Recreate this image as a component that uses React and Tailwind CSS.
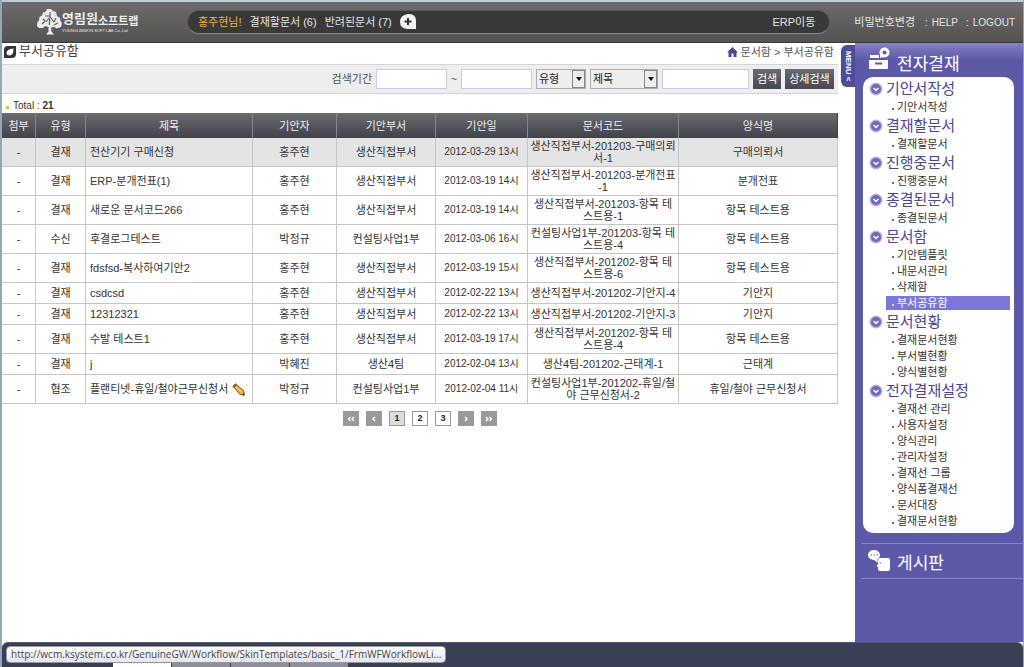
import clsx from "clsx";

const documents = [
  { type: "결재", title: "전산기기 구매신청", author: "홍주현", dept: "생산직접부서", date: "2012-03-29 13시", code: ["생산직접부서-201203-구매의뢰", "서-1"], form: "구매의뢰서" },
  { type: "결재", title: "ERP-분개전표(1)", author: "홍주현", dept: "생산직접부서", date: "2012-03-19 14시", code: ["생산직접부서-201203-분개전표", "-1"], form: "분개전표" },
  { type: "결재", title: "새로운 문서코드266", author: "홍주현", dept: "생산직접부서", date: "2012-03-19 14시", code: ["생산직접부서-201203-항목 테", "스트용-1"], form: "항목 테스트용" },
  { type: "수신", title: "후결로그테스트", author: "박정규", dept: "컨설팅사업1부", date: "2012-03-06 16시", code: ["컨설팅사업1부-201203-항목 테", "스트용-4"], form: "항목 테스트용" },
  { type: "결재", title: "fdsfsd-복사하여기안2", author: "홍주현", dept: "생산직접부서", date: "2012-03-19 15시", code: ["생산직접부서-201202-항목 테", "스트용-6"], form: "항목 테스트용" },
  { type: "결재", title: "csdcsd", author: "홍주현", dept: "생산직접부서", date: "2012-02-22 13시", code: ["생산직접부서-201202-기안지-4"], form: "기안지" },
  { type: "결재", title: "12312321", author: "홍주현", dept: "생산직접부서", date: "2012-02-22 13시", code: ["생산직접부서-201202-기안지-3"], form: "기안지" },
  { type: "결재", title: "수발 테스트1", author: "홍주현", dept: "생산직접부서", date: "2012-03-19 17시", code: ["생산직접부서-201202-항목 테", "스트용-4"], form: "항목 테스트용" },
  { type: "결재", title: "j", author: "박혜진", dept: "생산4팀", date: "2012-02-04 13시", code: ["생산4팀-201202-근태계-1"], form: "근태계" },
  { type: "협조", title: "플랜티넷-휴일/철야근무신청서", author: "박정규", dept: "컨설팅사업1부", date: "2012-02-04 11시", code: ["컨설팅사업1부-201202-휴일/철", "야 근무신청서-2"], form: "휴일/철야 근무신청서", edit: true },
];

const menu = [
  { title: "기안서작성", items: ["기안서작성"] },
  { title: "결재할문서", items: ["결재할문서"] },
  { title: "진행중문서", items: ["진행중문서"] },
  { title: "종결된문서", items: ["종결된문서"] },
  { title: "문서함", items: ["기안템플릿", "내문서관리", "삭제함", "부서공유함"] },
  { title: "문서현황", items: ["결재문서현황", "부서별현황", "양식별현황"] },
  {
    title: "전자결재설정",
    items: ["결재선 관리", "사용자설정", "양식관리", "관리자설정", "결재선 그룹", "양식폼결재선", "문서대장", "결재문서현황"],
  },
];

const columns = ["첨부", "유형", "제목", "기안자", "기안부서", "기안일", "문서코드", "양식명"];

function Logo() {
  return (
    <a href="#" className="flex items-center text-[#ececec]" aria-label="영림원소프트랩">
      <svg width="25" height="26" viewBox="0 0 25 26" fill="none">
        <path
          d="M10 0h4l2 2 3 1 1 4 3 2 .5 3 1.500 2-1 4-4 1.500-3-1.500-3 .5.500 4 2.500 3H9l2.500-3v-4.500L8 17l-2 2H2l-2-2 .5-4L2 11.500 2.500 8 5 6.500 6 3.500 8.500 3z"
          fill="#ececec"
        />
        <path
          d="M8 7h5M13 3v5l-4 5M13 8l4 5M12.500 10v6M6 10l2 2-3 3M19 9l-2 4M17 16l4-2"
          stroke="#626262"
          strokeWidth="1.200"
        />
      </svg>
      <span className="flex flex-col">
        <span className="flex items-end whitespace-nowrap font-bold">
          <span className="text-[13px] leading-[18px]">영림원</span>
          <span className="text-[11px] leading-[13px]">소프트랩</span>
        </span>
        <span className="whitespace-nowrap text-[4px] leading-[6px]">YOUNGLIMWON SOFT LAB Co.,Ltd.</span>
      </span>
    </a>
  );
}

function Header() {
  return (
    <header className="flex h-[43px] items-center border-t-2 border-b border-t-[#b9d0d8] border-b-[#3b3b3b] bg-linear-to-b from-[#6e6b6a] to-[#535252] pr-2 pl-[35px] text-[11px] text-[#e4e4e4]">
      <div className="w-[150px] shrink-0">
        <Logo />
      </div>
      <div className="flex h-6 flex-1 items-center rounded-full border border-[#5b5a5a] border-b-[#858585] bg-[#393939] pr-[14px] pl-[10px] whitespace-nowrap">
        <a href="#" className="mr-2 text-[#f0b440]">홍주현님!</a>
        <a href="#" className="mr-2">결재할문서 (6)</a>
        <a href="#" className="mr-2">반려된문서 (7)</a>
        <button type="button" aria-label="추가">
          <svg width="17" height="16" viewBox="0 0 17 16" className="block">
            <path d="M8 0h1q7 0 7 7v8H8Q0 15 0 8T8 0z" fill="#f4f4f4" />
            <path d="M8 4v7M4.500 7.500h7" stroke="#333" strokeWidth="2" />
          </svg>
        </button>
        <a href="#" className="ml-auto">ERP이동</a>
      </div>
      <nav className="ml-6 flex items-center whitespace-nowrap">
        <a href="#">비밀번호변경</a>
        <span className="mr-2 ml-[10px] flex gap-1 text-[10px]">
          <span>:</span>
          <a href="#">HELP</a>
        </span>
        <span className="flex gap-1 text-[10px]">
          <span>:</span>
          <a href="#">LOGOUT</a>
        </span>
      </nav>
    </header>
  );
}

function TitleBar() {
  return (
    <div className="flex h-[21px] items-start justify-between pr-1 pl-[2px]">
      <h1 className="flex items-start gap-[3px] text-[13px] leading-4 text-[#444]">
        <svg width="12" height="13" viewBox="0 0 12 13" className="mt-[3px]">
          <path d="M4 0h8v8q0 4-4 4H0V4q0-4 4-4z" fill="#333" />
          <path d="M9.500 2.500q0 7-4 7-3 0-3-2.500 0-4 7-4.500z" fill="#fff" />
        </svg>
        부서공유함
      </h1>
      <div className="flex items-center gap-[3px] text-[11px] leading-[18px] text-[#555]">
        <svg width="11" height="10" viewBox="0 0 11 10">
          <path d="M5.500 0 11 5.500H9.500V10h-3V6.500h-2V10h-3V5.500H0z" fill="#4b4795" />
        </svg>
        <a href="#">문서함</a>
        <span>&gt;</span>
        <a href="#">부서공유함</a>
      </div>
    </div>
  );
}

function Select({ label, className }) {
  return (
    <span className={clsx("relative flex h-5 border border-[#adadb5] bg-[#eee]", className)}>
      <select aria-label={label} className="w-full appearance-none pl-[2px] text-[11px] leading-[18px] text-[#222] outline-none">
        <option>{label}</option>
      </select>
      <span className="pointer-events-none absolute inset-y-0 right-0 flex w-[13px] items-center justify-center border border-[#888] bg-[#ececec]">
        <svg width="6" height="4" viewBox="0 0 6 4">
          <path d="M0 0h6L3 4z" fill="#111" />
        </svg>
      </span>
    </span>
  );
}

function SearchBar() {
  const input = "h-5 border border-[#c9c9ea] bg-white px-1 text-[11px] outline-none";
  const button = "h-5 bg-linear-to-b from-[#686b70] to-[#45484e] text-[11px] leading-5 text-white";
  return (
    <form className="flex h-[30px] items-center justify-end border-y border-[#d4d4d8] bg-[#eee] pr-1 text-[11px] text-[#555]">
      <label htmlFor="from" className="mr-1">검색기간</label>
      <input id="from" className={clsx(input, "w-[71px]")} />
      <label htmlFor="to" className="w-[14px] text-center">~</label>
      <input id="to" className={clsx(input, "mr-1 w-[71px]")} />
      <Select label="유형" className="mr-1 w-[50px]" />
      <Select label="제목" className="mr-1 w-[68px]" />
      <input aria-label="검색어" className={clsx(input, "mr-1 w-[87px]")} />
      <button type="button" className={clsx(button, "mr-1 w-7")}>검색</button>
      <button type="button" className={clsx(button, "w-[49px]")}>상세검색</button>
    </form>
  );
}

function Pencil() {
  return (
    <svg width="13" height="13" viewBox="0 0 13 13" className="shrink-0">
      <path d="M1 3 3.500 1 11.500 7.500 12.500 12 8 11.500z" fill="#f0b13c" stroke="#7c5620" strokeWidth="1" />
      <path d="M3.500 3.500 9.500 9" stroke="#ffdf90" strokeWidth="1" />
      <path d="M.500 3.500 3.500.500 5 2 2 5z" fill="#8a5a3c" />
      <path d="M12.500 12.500 10 12l2-2z" fill="#333" />
    </svg>
  );
}

function DocumentTable() {
  return (
    <table className="w-full table-fixed border-separate border-spacing-0 text-center text-[11px] leading-3 text-[#333]">
      <colgroup>
        <col className="w-[34px]" />
        <col className="w-[50px]" />
        <col />
        <col className="w-[84px]" />
        <col className="w-[99px]" />
        <col className="w-[92px]" />
        <col className="w-[151px]" />
        <col className="w-[159px]" />
      </colgroup>
      <thead>
        <tr className="h-[25px] bg-linear-to-b from-[#6a6c70] to-[#404349] text-[#eee]">
          {columns.map((name) => (
            <th key={name} scope="col" className="border-r border-[#85878b] p-0 font-normal last:border-[#404349]">
              {name}
            </th>
          ))}
        </tr>
      </thead>
      <tbody>
        {documents.map((doc, i) => (
          <tr
            key={i}
            className={clsx(
              "[&>td]:border-r [&>td]:border-b [&>td]:border-[#c6c6c6] [&>td]:p-0",
              doc.code.length > 1 ? "h-[29px]" : "h-[21px]",
              i === 0 && "bg-[#e4e4e4]"
            )}
          >
            <td>-</td>
            <td>{doc.type}</td>
            <td>
              <a href="#" className="flex items-center gap-1 pl-1 whitespace-nowrap">
                {doc.title}
                {doc.edit && <Pencil />}
              </a>
            </td>
            <td>{doc.author}</td>
            <td>{doc.dept}</td>
            <td className="text-[10px] whitespace-nowrap">{doc.date}</td>
            <td className="whitespace-nowrap">
              {doc.code.map((line) => (
                <div key={line}>{line}</div>
              ))}
            </td>
            <td>{doc.form}</td>
          </tr>
        ))}
      </tbody>
    </table>
  );
}

function Arrows({ back, double }) {
  return (
    <svg width="8" height="6" viewBox="0 0 8 6" fill="none" stroke="#fff" strokeWidth="1.300" className={clsx(back && "rotate-180")}>
      {double ? <path d="M1 1l2 2-2 2M4.500 1l2 2-2 2" /> : <path d="M3 1l2 2-2 2" />}
    </svg>
  );
}

function Pagination() {
  const arrow = "flex h-[15px] w-4 items-center justify-center bg-[#999]";
  const page = "h-[15px] w-4 border border-[#999] text-[9px] leading-[13px] font-bold text-[#222]";
  return (
    <nav className="mt-[7px] flex justify-center gap-[7px]" aria-label="페이지">
      <button type="button" aria-label="처음" className={arrow}><Arrows back double /></button>
      <button type="button" aria-label="이전" className={arrow}><Arrows back /></button>
      <button type="button" className={clsx(page, "bg-[#ddd]")}>1</button>
      <button type="button" className={page}>2</button>
      <button type="button" className={page}>3</button>
      <button type="button" aria-label="다음" className={arrow}><Arrows /></button>
      <button type="button" aria-label="마지막" className={arrow}><Arrows double /></button>
    </nav>
  );
}

function Sidebar() {
  return (
    <aside className="w-[168px] shrink-0 bg-[#5d59a9]">
      <div className="flex h-[34px] items-start bg-linear-to-b from-[#8582c4] to-[#5d59a9] to-50% pt-1 pl-[14px] text-white">
        <svg width="22" height="23" viewBox="0 0 22 23" className="shrink-0">
          <path d="M1 8h9v3H1z" fill="#fff" />
          <path d="M0 13h19v8q0 1-1 1H1q-1 0-1-1z" fill="#fff" />
          <path d="M6 16.500h7" stroke="#5d59a9" strokeWidth="2" />
          <path d="M11 11l.5-6 6 4z" fill="#fff" />
          <circle cx="15.500" cy="5.500" r="5" fill="#fff" />
          <circle cx="15.500" cy="5.500" r="2" fill="#5d59a9" />
        </svg>
        <h2 className="mt-[6px] ml-[6px] text-[17px] leading-6">전자결재</h2>
      </div>
      <nav className="mr-[9px] ml-2 rounded-[10px] bg-white pt-px pb-1">
        {menu.map((section) => (
          <section key={section.title}>
            <h3 className="flex h-[21px] items-center gap-[3px] pl-[6px] text-[15px] leading-5 text-[#4a4694]">
              <svg width="14" height="14" viewBox="0 0 14 14" className="shrink-0">
                <circle cx="7" cy="7" r="6.500" fill="#b5b2e2" />
                <circle cx="7" cy="7" r="5" fill="#6d69bb" />
                <path d="M4.500 6 7 8.500 9.500 6" stroke="#fff" strokeWidth="1.500" fill="none" />
              </svg>
              {section.title}
            </h3>
            <ul className="pr-1 pl-[23px] text-[11px] leading-[14px]">
              {section.items.map((item) => (
                <li key={item} className="py-px">
                  <a
                    href="#"
                    className={clsx(
                      "flex h-[14px] items-center gap-[3px] pl-[6px]",
                      item === "부서공유함" ? "bg-[#7b77d8] text-white" : "text-[#333]"
                    )}
                  >
                    <span className="mt-1 size-[2px] bg-current opacity-70" />
                    {item}
                  </a>
                </li>
              ))}
            </ul>
          </section>
        ))}
      </nav>
      <a href="#" className="mt-[10px] ml-[6px] flex h-9 items-center gap-[7px] border-y border-[#8784c6] pl-[7px] text-[17px] leading-5 text-white">
        <svg width="22" height="25" viewBox="0 0 22 25" className="shrink-0">
          <ellipse cx="6" cy="6" rx="6" ry="5" fill="#fff" />
          <path d="M5 10l5 4-1-6z" fill="#fff" />
          <path d="M2.500 6H4M5.500 6H7M8.500 6H10" stroke="#5d59a9" />
          <path d="M12 9h8q2 0 2 2v9q0 2-2 2h-8q-2 0-2-2v-2l-1.500-1L10 15v-4q0-2 2-2z" fill="#fff" />
          <path d="M12 14h1" stroke="#5d59a9" />
        </svg>
        <span className="mt-[5px]">게시판</span>
      </a>
    </aside>
  );
}

function StatusBar() {
  return (
    <footer className="flex h-[25px] flex-col items-start justify-between overflow-hidden rounded-t-md border-t border-[#555b70] bg-[#393f54] pt-[3px]">
      <div className="ml-1 h-[17px] rounded-sm border border-[#999] bg-linear-to-b from-white to-[#e4e5f0] px-1 font-['Open_Sans','Noto_Sans',sans-serif] text-[10px] leading-[15px] whitespace-nowrap text-[#444]">
        http://wcm.ksystem.co.kr/GenuineGW/Workflow/SkinTemplates/basic_1/FrmWFWorkflowLi...
      </div>
      <div className="ml-[111px] flex h-1 gap-px">
        <span className="w-[58px] bg-white" />
        <span className="w-[58px] bg-[#8b8f9d]" />
        <span className="w-[58px] bg-[#8b8f9d]" />
        <span className="w-[58px] bg-[#8b8f9d]" />
      </div>
    </footer>
  );
}

export default function App() {
  return (
    <div className="flex min-h-screen flex-col border-r border-l-2 border-r-[#8fa3b8] border-l-[#8fa9ba] bg-white font-['Liberation_Sans','Noto_Sans_CJK_KR',sans-serif]">
      <Header />
      <div className="flex flex-1">
        <main className="min-w-0 flex-1">
          <TitleBar />
          <SearchBar />
          <p className="flex h-[19px] items-end gap-1 pl-1 text-[10px] leading-[14px] text-[#333]">
            <span className="mb-1 size-[3px] bg-[#e8b45c]" />
            <span>
              Total : <b>21</b>
            </span>
          </p>
          <DocumentTable />
          <Pagination />
        </main>
        <div className="w-[17px] shrink-0 pt-[2px] pl-[3px]">
          <button
            type="button"
            className="flex h-[42px] w-[14px] items-center justify-center rounded-l-md bg-[#4f4b9b] text-[8px] leading-[14px] font-bold whitespace-nowrap text-white [writing-mode:vertical-rl]"
          >
            MENU &lt;
          </button>
        </div>
        <Sidebar />
      </div>
      <StatusBar />
    </div>
  );
}
